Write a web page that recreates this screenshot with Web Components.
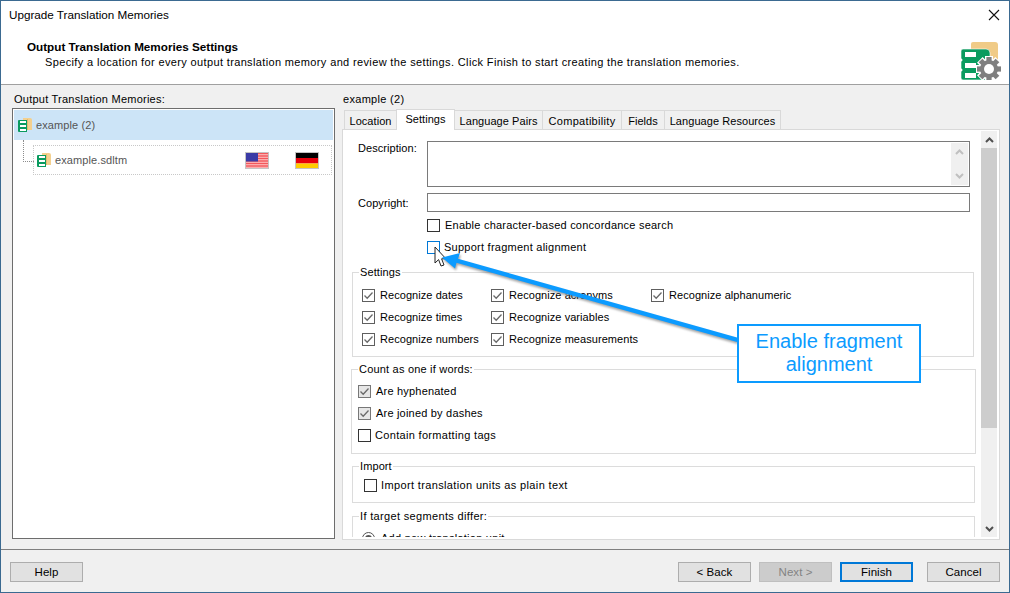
<!DOCTYPE html>
<html>
<head>
<meta charset="utf-8">
<title>Upgrade Translation Memories</title>
<style>
  html, body {
    margin: 0;
    padding: 0;
    background: #f0f0f0;
    font: 11px/14px "Liberation Sans", Arial, sans-serif;
    letter-spacing: .06px;
    color: #000;
  }
</style>
</head>
<body>
<wizard-window>
  <wizard-header slot="header" title-text="Upgrade Translation Memories" heading="Output Translation Memories Settings" info="Specify a location for every output translation memory and review the settings. Click Finish to start creating the translation memories."></wizard-header>

  <div slot="left" style="letter-spacing:.24px">Output Translation Memories:</div>
  <memory-tree slot="left">
    <memory-row selected>example (2)</memory-row>
    <memory-row child>example.sdltm
      <flag-icon slot="flags" country="us"></flag-icon>
      <flag-icon slot="flags" country="de"></flag-icon>
    </memory-row>
  </memory-tree>

  <div slot="right" style="letter-spacing:.3px">example (2)</div>
  <tab-strip slot="right">
    <tab-item style="width:53px">Location</tab-item>
    <tab-item active style="width:59px">Settings</tab-item>
    <tab-item style="width:89px">Language Pairs</tab-item>
    <tab-item style="width:80px;letter-spacing:.3px">Compatibility</tab-item>
    <tab-item style="width:44px">Fields</tab-item>
    <tab-item style="width:117px">Language Resources</tab-item>
  </tab-strip>
  <tab-page slot="right">
    <form-row label="Description:" style="margin-top:11px"><text-box rows style="height:46px"></text-box></form-row>
    <form-row label="Copyright:" style="margin-top:6px"><text-box style="height:19px"></text-box></form-row>

    <check-box style="margin:2px 0 0 84px;letter-spacing:.23px">Enable character-based concordance search</check-box>
    <check-box focused style="margin-left:84px;--gap:4px;letter-spacing:.25px">Support fragment alignment</check-box>

    <group-box label="Settings" style="margin:7px 7px 0 9px;--pad:5px 0 6px 9px">
      <check-grid>
        <check-box checked>Recognize dates</check-box>
        <check-box checked>Recognize acronyms</check-box>
        <check-box checked>Recognize alphanumeric</check-box>
        <check-box checked>Recognize times</check-box>
        <check-box checked>Recognize variables</check-box>
        <span></span>
        <check-box checked>Recognize numbers</check-box>
        <check-box checked>Recognize measurements</check-box>
      </check-grid>
    </group-box>

    <group-box label="Count as one if words:" style="margin:5px 5px 0 8px;--pad:4px 0 7px 6px;--legend-spacing:.2px">
      <check-box checked shaded style="letter-spacing:.2px">Are hyphenated</check-box>
      <check-box checked shaded style="letter-spacing:.2px">Are joined by dashes</check-box>
      <check-box style="--gap:4px;letter-spacing:.32px">Contain formatting tags</check-box>
    </group-box>

    <group-box label="Import" style="margin:5px 6px 0 9px;--pad:1px 0 6px 11px">
      <check-box style="--gap:4px;letter-spacing:.36px">Import translation units as plain text</check-box>
    </group-box>

    <group-box label="If target segments differ:" style="margin:6px 6px 0 9px;--pad:4px 0 6px 9px;--legend-spacing:.34px">
      <radio-box style="letter-spacing:.26px">Add new translation unit</radio-box>
    </group-box>
  </tab-page>

  <wizard-button slot="footer">Help</wizard-button>
  <span slot="footer" style="flex:1"></span>
  <wizard-button slot="footer">&lt; Back</wizard-button>
  <wizard-button slot="footer" disabled>Next &gt;</wizard-button>
  <wizard-button slot="footer" primary>Finish</wizard-button>
  <wizard-button slot="footer" style="margin-left:6px">Cancel</wizard-button>

  <callout-note slot="overlay">Enable fragment<br>alignment</callout-note>
</wizard-window>

<script>
class WizardWindow extends HTMLElement {
  constructor() {
    super();
    this.attachShadow({ mode: 'open' }).innerHTML = `
      <style>
        *{ box-sizing: border-box; }
        :host {
          display: flex;
          flex-direction: column;
          position: relative;
          width: 1010px;
          height: 593px;
          box-sizing: border-box;
          border: 1px solid #3b6a91;
          overflow: hidden;
          background: #f0f0f0;
        }
        .main {
          flex: auto;
          display: flex;
          min-height: 0;
        }
        .left {
          width: 341px;
          flex-shrink: 0;
          display: flex;
          flex-direction: column;
          padding: 7px 0 10px 11px;
        }
        .right {
          flex: auto;
          min-width: 0;
          display: flex;
          flex-direction: column;
          padding: 7px 9px 9px 0;
        }
        .right ::slotted(div) { padding-left: 1px; }
        .left ::slotted(div) { padding-left: 2px; }
        .footer {
          flex-shrink: 0;
          height: 43px;
          border-top: 1px solid #7f7f7f;
          padding: 12px 9px 0 9px;
          display: flex;
          gap: 8px;
          align-items: flex-start;
        }
      </style>
      <slot name="header"></slot>
      <div class="main">
        <div class="left"><slot name="left"></slot></div>
        <div class="right"><slot name="right"></slot></div>
      </div>
      <div class="footer"><slot name="footer"></slot></div>
      <slot name="overlay"></slot>
    `;
  }
}

class WizardHeader extends HTMLElement {
  constructor() {
    super();
    this.attachShadow({ mode: 'open' }).innerHTML = `
      <style>
        :host {
          display: block;
          flex-shrink: 0;
          height: 84px;
          box-sizing: border-box;
          background: #fff;
          border-bottom: 1px solid #a0a0a0;
        }
        .titleLine {
          height: 28px;
          display: flex;
          align-items: center;
          justify-content: space-between;
          padding: 0 9px 0 8px;
          font-size: 11.7px;
          letter-spacing: 0;
        }
        .infoLine {
          display: flex;
          justify-content: space-between;
          padding: 0 6px 0 26px;
        }
        .texts { padding-top: 10px; }
        .heading { font-weight: bold; font-size: 11.7px; line-height: 15px; letter-spacing: 0; margin-bottom: 1px; }
        .info { line-height: 15px; padding-left: 18px; letter-spacing: .36px; white-space: nowrap; }
        .bigIcon { margin-top: 13px; display: block; }
      </style>
      <div class="titleLine">
        <span>${this.getAttribute('title-text')}</span>
        <svg width="12" height="12" viewBox="0 0 12 12"><path d="M1 1 L11 11 M11 1 L1 11" stroke="#111" stroke-width="1.1" fill="none"/></svg>
      </div>
      <div class="infoLine">
        <div class="texts">
          <div class="heading">${this.getAttribute('heading')}</div>
          <div class="info">${this.getAttribute('info')}</div>
        </div>
        <svg class="bigIcon" width="42" height="38" viewBox="0 0 42 38">
          <path d="M10 2 Q10 0 12 0 H34 Q37 0 37 3 V24 H10 Z" fill="#f0cb87"/>
          <path d="M2 7 H25 Q29 7 29 11 V38 H2 Q0 38 0 36 V29 H1 V27 H0 V19 H1 V17 H0 V9 Q0 7 2 7 Z" fill="#0a9b5f" stroke="#fff" stroke-width=".6"/>
          <rect x="4" y="10" width="11" height="5" fill="#fff"/>
          <rect x="4" y="21" width="11" height="5" fill="#fff"/>
          <rect x="4" y="31" width="11" height="5" fill="#fff"/>
          <g transform="translate(28 27)">
            <circle r="10.5" fill="#fff"/>
            <g fill="#fff" stroke="#fff" stroke-width="2">
              <rect x="-3" y="-12" width="6" height="24"/>
              <rect x="-3" y="-12" width="6" height="24" transform="rotate(45)"/>
              <rect x="-3" y="-12" width="6" height="24" transform="rotate(90)"/>
              <rect x="-3" y="-12" width="6" height="24" transform="rotate(135)"/>
            </g>
            <g fill="#7f7f7f">
              <rect x="-2.6" y="-12" width="5.2" height="24"/>
              <rect x="-2.6" y="-12" width="5.2" height="24" transform="rotate(45)"/>
              <rect x="-2.6" y="-12" width="5.2" height="24" transform="rotate(90)"/>
              <rect x="-2.6" y="-12" width="5.2" height="24" transform="rotate(135)"/>
              <circle r="9"/>
            </g>
            <circle r="5" fill="#fff"/>
          </g>
        </svg>
      </div>
    `;
  }
}

class MemoryTree extends HTMLElement {
  constructor() {
    super();
    this.attachShadow({ mode: 'open' }).innerHTML = `
      <style>
        :host {
          display: block;
          flex: auto;
          margin-top: 2px;
          width: 323px;
          box-sizing: border-box;
          background: #fff;
          border: 1px solid #6d6d6d;
          padding: 1px 1px 0 1px;
        }
      </style>
      <slot></slot>
    `;
  }
}

class TmIcon extends HTMLElement {
  constructor() {
    super();
    this.attachShadow({ mode: 'open' }).innerHTML = `
      <style>
        :host { display: block; width: 14px; height: 15px; flex-shrink: 0; }
        svg { display: block; }
      </style>
      <svg width="14" height="15" viewBox="0 0 14 15">
        <path d="M5 0 H12 Q14 0 14 2 V12 H5 Z" fill="#f3d08f"/>
        <rect x="9" y="1" width="1" height="11" fill="#e3b96f"/>
        <path d="M1 2 H9 V14 H1 Q0 14 0 13 V3 Q0 2 1 2 Z" fill="#0a9b5f"/>
        <rect x="2" y="3" width="6" height="2" fill="#fff"/>
        <rect x="2" y="7" width="6" height="2" fill="#fff"/>
        <rect x="2" y="11" width="6" height="2" fill="#fff"/>
      </svg>
    `;
  }
}

class FlagIcon extends HTMLElement {
  constructor() {
    super();
    const flags = {
      us: `
        <rect width="24" height="17" fill="#ffc9c9"/>
        <path d="M0 1.5 H24 M0 4 H24 M0 6.5 H24 M0 9 H24 M0 11.5 H24 M0 14 H24 M0 16.3 H24" stroke="#f2585c" stroke-width="1.3"/>
        <rect width="13" height="9.5" fill="#3b3ba6"/>`,
      de: `
        <rect width="24" height="6" fill="#000"/>
        <rect y="6" width="24" height="5.5" fill="#e6000c"/>
        <rect y="11.5" width="24" height="5.5" fill="#ffcc00"/>`
    };
    this.attachShadow({ mode: 'open' }).innerHTML = `
      <style>
        :host { display: block; width: 24px; height: 17px; }
        svg { display: block; outline: 1px solid #c4c4c4; outline-offset: -1px; }
      </style>
      <svg width="24" height="17" viewBox="0 0 24 17">${flags[this.getAttribute('country')]}</svg>
    `;
  }
}

class MemoryRow extends HTMLElement {
  constructor() {
    super();
    this.attachShadow({ mode: 'open' }).innerHTML = `
      <style>
        :host {
          display: flex;
          align-items: center;
          position: relative;
          height: 30px;
          box-sizing: border-box;
          padding-left: 4px;
          gap: 4px;
          color: #555;
          letter-spacing: .1px;
        }
        :host([selected]) { background: #cce4f7; }
        :host([child]) {
          margin: 5px 1px 0 19px;
          padding-left: 3px;
          border: 1px dotted #c8c8c8;
        }
        :host([child])::before {
          content: '';
          position: absolute;
          left: -11px;
          top: -6px;
          width: 10px;
          height: 21px;
          border-left: 1px dotted #8c8c8c;
          border-bottom: 1px dotted #8c8c8c;
        }
        .flags {
          margin-left: auto;
          margin-right: 12px;
          display: flex;
          gap: 26px;
        }
      </style>
      <tm-icon></tm-icon>
      <span><slot></slot></span>
      <div class="flags"><slot name="flags"></slot></div>
    `;
  }
}

class TabStrip extends HTMLElement {
  constructor() {
    super();
    this.attachShadow({ mode: 'open' }).innerHTML = `
      <style>
        :host {
          display: flex;
          flex: none;
          align-items: flex-end;
          position: relative;
          z-index: 1;
          height: 21px;
          margin: 3px 0 -1px 0;
          padding-left: 2px;
        }
      </style>
      <slot></slot>
    `;
  }
}

class TabItem extends HTMLElement {
  constructor() {
    super();
    this.attachShadow({ mode: 'open' }).innerHTML = `
      <style>
        :host {
          display: flex;
          align-items: center;
          justify-content: center;
          box-sizing: border-box;
          height: 19px;
          margin-bottom: 1px;
          padding-top: 1px;
          background: #f0f0f0;
          border: 1px solid #d9d9d9;
          border-bottom: 0;
          margin-left: -1px;
          white-space: nowrap;
        }
        :host(:first-child) { margin-left: 0; }
        :host([active]) {
          height: 21px;
          margin-bottom: 0;
          background: #fff;
          padding-top: 0;
          padding-bottom: 2px;
          position: relative;
        }
      </style>
      <slot></slot>
    `;
  }
}

class TabPage extends HTMLElement {
  constructor() {
    super();
    this.attachShadow({ mode: 'open' }).innerHTML = `
      <style>
        :host {
          display: flex;
          flex: auto;
          min-height: 0;
          box-sizing: border-box;
          background: #fff;
          border: 1px solid #d9d9d9;
          padding: 0 2px 2px 0;
        }
        .content {
          flex: auto;
          min-width: 0;
          overflow: hidden;
        }
      </style>
      <div class="content"><slot></slot></div>
      <scroll-bar></scroll-bar>
    `;
  }
}

class ScrollBar extends HTMLElement {
  constructor() {
    super();
    this.attachShadow({ mode: 'open' }).innerHTML = `
      <style>
        :host {
          display: flex;
          flex-direction: column;
          flex-shrink: 0;
          width: 16px;
          margin-top: 1px;
          background: #f0f0f0;
        }
        .arrow { height: 17px; display: flex; align-items: center; justify-content: center; flex-shrink: 0; }
        .thumb { height: 280px; background: #cdcdcd; flex-shrink: 0; }
        .rest { flex: auto; }
      </style>
      <div class="arrow"><svg width="9" height="6" viewBox="0 0 9 6"><path d="M1 5 L4.5 1.5 L8 5" fill="none" stroke="#505050" stroke-width="2"/></svg></div>
      <div class="thumb"></div>
      <div class="rest"></div>
      <div class="arrow"><svg width="9" height="6" viewBox="0 0 9 6"><path d="M1 1 L4.5 4.5 L8 1" fill="none" stroke="#505050" stroke-width="2"/></svg></div>
    `;
  }
}

class FormRow extends HTMLElement {
  constructor() {
    super();
    this.attachShadow({ mode: 'open' }).innerHTML = `
      <style>
        :host {
          display: grid;
          grid-template-columns: 69px 1fr;
          padding: 0 11px 0 15px;
        }
        :host([label^="Copy"]) { align-items: center; }
      </style>
      <div>${this.getAttribute('label')}</div>
      <slot></slot>
    `;
  }
}

class TextBox extends HTMLElement {
  constructor() {
    super();
    const bar = this.hasAttribute('rows') ? `
      <div class="bar">
        <svg width="9" height="6" viewBox="0 0 9 6"><path d="M1 5 L4.5 1.5 L8 5" fill="none" stroke="#c0c0c0" stroke-width="2"/></svg>
        <svg width="9" height="6" viewBox="0 0 9 6"><path d="M1 1 L4.5 4.5 L8 1" fill="none" stroke="#c0c0c0" stroke-width="2"/></svg>
      </div>` : '';
    this.attachShadow({ mode: 'open' }).innerHTML = `
      <style>
        :host {
          display: flex;
          justify-content: flex-end;
          box-sizing: border-box;
          border: 1px solid #7a7a7a;
          background: #fff;
          padding: 1px;
        }
        .bar {
          width: 17px;
          background: #f0f0f0;
          display: flex;
          flex-direction: column;
          justify-content: space-between;
          align-items: center;
          padding: 6px 0;
        }
      </style>
      ${bar}
    `;
  }
}

class CheckBox extends HTMLElement {
  constructor() {
    super();
    this.attachShadow({ mode: 'open' }).innerHTML = `
      <style>
        :host {
          display: flex;
          align-items: center;
          height: 22px;
          gap: var(--gap, 5px);
          white-space: nowrap;
        }
        .box {
          width: 13px;
          height: 13px;
          box-sizing: border-box;
          flex-shrink: 0;
          border: 1px solid #333;
          background: #fff;
          display: flex;
          align-items: center;
          justify-content: center;
        }
        :host([checked]) .box { border-color: #5f5f5f; }
        :host([shaded]) .box { background: #e6e6e6; border-color: #777; }
        :host([focused]) .box { border-color: #0078d7; }
        svg { display: none; }
        :host([checked]) svg { display: block; }
      </style>
      <div class="box"><svg width="11" height="11" viewBox="0 0 11 11"><path d="M1.5 5.5 L4.2 8.3 L9.5 2.5" fill="none" stroke="#6a6a6a" stroke-width="1.3"/></svg></div>
      <span><slot></slot></span>
    `;
  }
}

class RadioBox extends HTMLElement {
  constructor() {
    super();
    this.attachShadow({ mode: 'open' }).innerHTML = `
      <style>
        :host { display: flex; align-items: center; height: 22px; gap: 6px; white-space: nowrap; }
        .dot {
          width: 13px; height: 13px; box-sizing: border-box;
          border: 1px solid #555; border-radius: 50%;
          display: flex; align-items: center; justify-content: center;
        }
        .dot::after { content: ''; width: 7px; height: 7px; border-radius: 50%; background: #555; }
      </style>
      <div class="dot"></div>
      <span><slot></slot></span>
    `;
  }
}

class CheckGrid extends HTMLElement {
  constructor() {
    super();
    this.attachShadow({ mode: 'open' }).innerHTML = `
      <style>
        :host {
          display: grid;
          grid-template-columns: 129px 160px 1fr;
        }
      </style>
      <slot></slot>
    `;
  }
}

class GroupBox extends HTMLElement {
  constructor() {
    super();
    this.attachShadow({ mode: 'open' }).innerHTML = `
      <style>
        :host { display: block; }
        fieldset {
          margin: 0;
          padding: 0;
          border: 1px solid #dcdcdc;
          min-width: 0;
        }
        legend {
          margin-left: 6px;
          padding: 0 1px;
          line-height: 14px;
          letter-spacing: var(--legend-spacing, .1px);
        }
        .body { padding: var(--pad, 0); }
      </style>
      <fieldset>
        <legend>${this.getAttribute('label')}</legend>
        <div class="body"><slot></slot></div>
      </fieldset>
    `;
  }
}

class WizardButton extends HTMLElement {
  constructor() {
    super();
    this.attachShadow({ mode: 'open' }).innerHTML = `
      <style>
        :host {
          display: flex;
          align-items: center;
          justify-content: center;
          box-sizing: border-box;
          width: 73px;
          height: 20px;
          background: #e1e1e1;
          border: 1px solid #adadad;
          font-size: 11.5px;
          white-space: nowrap;
        }
        :host([disabled]) { background: #cccccc; border-color: #bfbfbf; color: #838383; }
        :host([primary]) { border: 2px solid #0078d7; }
      </style>
      <slot></slot>
    `;
  }
}

class CalloutNote extends HTMLElement {
  constructor() {
    super();
    this.attachShadow({ mode: 'open' }).innerHTML = `
      <style>
        :host { position: absolute; inset: 0; pointer-events: none; }
        svg { position: absolute; left: -1px; top: -1px; }
        .box {
          position: absolute;
          left: 736px;
          top: 323px;
          width: 184px;
          height: 59px;
          box-sizing: border-box;
          border: 2px solid #0c9bff;
          background: #fff;
          color: #0c9bff;
          font-size: 20px;
          line-height: 23px;
          letter-spacing: 0;
          text-align: center;
          padding-top: 4px;
        }
      </style>
      <svg width="1010" height="593" viewBox="0 0 1010 593">
        <path d="M435 247 V263 L438.6 259.6 L441 266 L444 265 L441.6 258.8 L446 258.8 Z" fill="#fff" stroke="#222" stroke-width="1"/>
        <g style="filter: drop-shadow(1px 2px 1px rgba(90,90,90,.55))">
          <path d="M442 257.5 L460 253 L458 258.8 L737 337.5 L737 342 L456.5 262.8 L455 268.5 Z" fill="#0c9bff"/>
        </g>
      </svg>
      <div class="box"><slot></slot></div>
    `;
  }
}

customElements.define('wizard-window', WizardWindow);
customElements.define('wizard-header', WizardHeader);
customElements.define('memory-tree', MemoryTree);
customElements.define('tm-icon', TmIcon);
customElements.define('flag-icon', FlagIcon);
customElements.define('memory-row', MemoryRow);
customElements.define('tab-strip', TabStrip);
customElements.define('tab-item', TabItem);
customElements.define('tab-page', TabPage);
customElements.define('scroll-bar', ScrollBar);
customElements.define('form-row', FormRow);
customElements.define('text-box', TextBox);
customElements.define('check-box', CheckBox);
customElements.define('radio-box', RadioBox);
customElements.define('check-grid', CheckGrid);
customElements.define('group-box', GroupBox);
customElements.define('wizard-button', WizardButton);
customElements.define('callout-note', CalloutNote);
</script>
</body>
</html>
